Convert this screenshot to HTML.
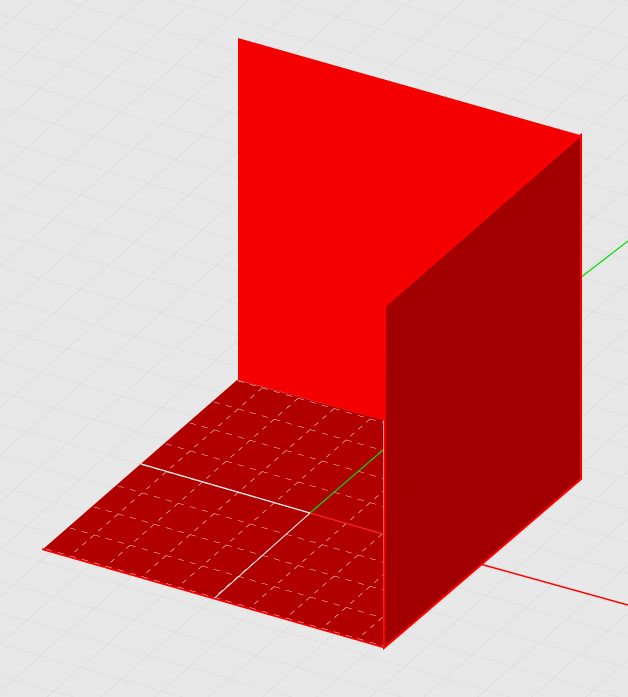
<!DOCTYPE html>
<html><head><style>html,body{margin:0;padding:0;background:#e8e8e8;overflow:hidden}svg{display:block}</style></head>
<body>
<svg width="628" height="697" viewBox="0 0 628 697" xmlns="http://www.w3.org/2000/svg">
<defs>
<pattern id="bg" width="30" height="30" patternUnits="userSpaceOnUse" patternTransform="matrix(1.35,0.39,-0.9,0.79,310,513)">
<rect width="30" height="30" fill="#e8e8e8"/>
<path d="M0 0H30M0 0V30" stroke="#dadada" stroke-width="1.1" fill="none"/>
</pattern>
<pattern id="fl" width="30" height="30" patternUnits="userSpaceOnUse" patternTransform="matrix(1.2,0.345,-0.8,0.7,310,513)">
<rect width="30" height="30" fill="#b00000"/>
<path d="M0 0H30M0 0V30" stroke="#ffffff" stroke-width="1" stroke-dasharray="5 5" fill="none"/>
</pattern>
<clipPath id="fc"><polygon points="42,550 237,380 383,420 383,648"/></clipPath>
</defs>
<rect width="628" height="697" fill="url(#bg)"/>
<line x1="480" y1="564" x2="628" y2="605" stroke="#ff0000" stroke-width="1.5"/>
<line x1="580" y1="278" x2="628" y2="241" stroke="#00dd00" stroke-width="1.2"/>
<polygon points="238,38 580,135 386,305 386,421 238,380" fill="#f50000"/>
<polygon points="42,550 237,380 383,420 383,648" fill="url(#fl)"/>
<g clip-path="url(#fc)">
<line x1="0" y1="423" x2="310" y2="513" stroke="#f4f4f4" stroke-width="1.3"/>
<line x1="310" y1="513" x2="383" y2="534" stroke="#ff2020" stroke-width="1.3"/>
<line x1="310" y1="513" x2="383" y2="450" stroke="#00dd00" stroke-width="1.2"/>
<line x1="310" y1="513" x2="190" y2="620" stroke="#f4f4f4" stroke-width="1"/>
</g>
<line x1="42" y1="549" x2="383" y2="647" stroke="#ff0000" stroke-width="1.5"/>
<polygon points="385,306 581,135 581,479 384,648" fill="#a20000" stroke="#ff0000" stroke-width="2"/>
</svg>
</body></html>
